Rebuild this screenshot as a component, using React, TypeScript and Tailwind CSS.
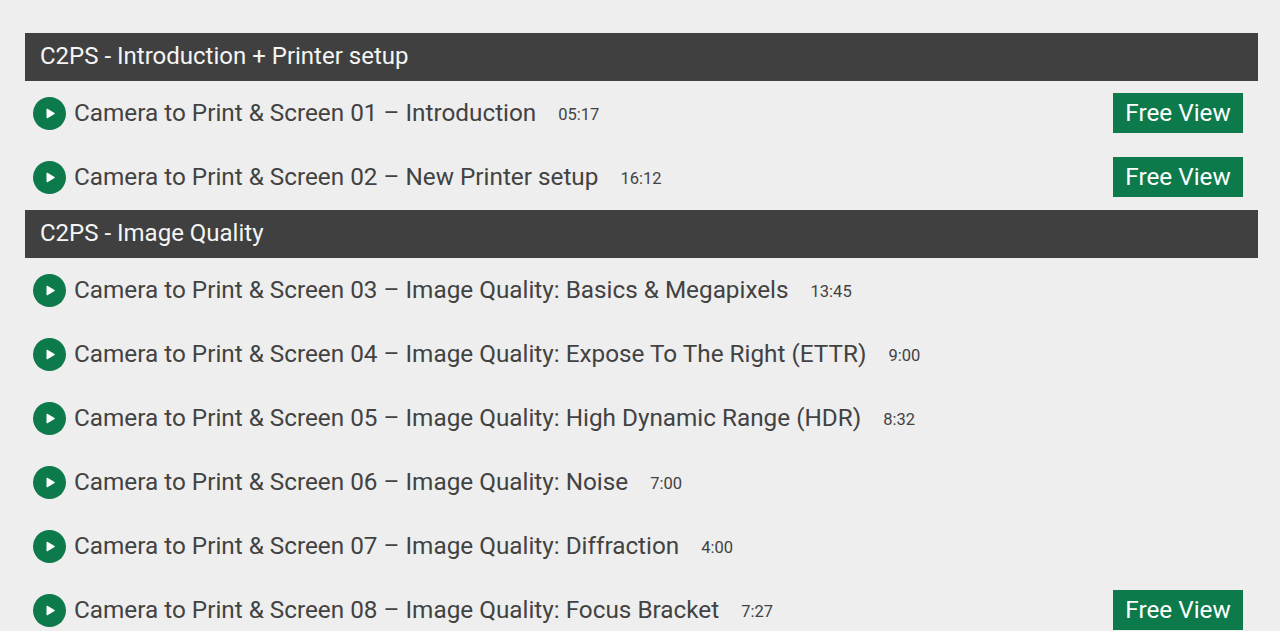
import React from 'react';

type Lesson = { title: string; time: string; free?: boolean };

const sections: { name: string; lessons: Lesson[] }[] = [
  {
    name: 'C2PS - Introduction + Printer setup',
    lessons: [
      { title: 'Camera to Print & Screen 01 – Introduction', time: '05:17', free: true },
      { title: 'Camera to Print & Screen 02 – New Printer setup', time: '16:12', free: true },
    ],
  },
  {
    name: 'C2PS - Image Quality',
    lessons: [
      { title: 'Camera to Print & Screen 03 – Image Quality: Basics & Megapixels', time: '13:45' },
      { title: 'Camera to Print & Screen 04 – Image Quality: Expose To The Right (ETTR)', time: '9:00' },
      { title: 'Camera to Print & Screen 05 – Image Quality: High Dynamic Range (HDR)', time: '8:32' },
      { title: 'Camera to Print & Screen 06 – Image Quality: Noise', time: '7:00' },
      { title: 'Camera to Print & Screen 07 – Image Quality: Diffraction', time: '4:00' },
      { title: 'Camera to Print & Screen 08 – Image Quality: Focus Bracket', time: '7:27', free: true },
    ],
  },
];

const PlayIcon = () => (
  <svg viewBox="0 0 33 33" className="w-[33px] h-[33px] shrink-0">
    <circle cx="16.5" cy="16.5" r="16.5" fill="#0d7a4c" />
    <path d="M14 12 L21.5 16.5 L14 21 Z" fill="#fff" stroke="#fff" strokeWidth="1" strokeLinejoin="round" />
  </svg>
);

const LessonRow: React.FC<{ lesson: Lesson }> = ({ lesson }) => (
  <div className="flex items-center h-16 pl-2 pr-[15px]">
    <PlayIcon />
    <span className="ml-2 text-[24.3px] text-[#424242]">{lesson.title}</span>
    <span className="ml-[22px] mt-1 text-[16.5px] text-[#424242]">{lesson.time}</span>
    {lesson.free && (
      <span className="ml-auto flex items-center justify-center w-[130px] h-10 bg-[#0d7a4c] text-white text-[24.3px] font-[450]">
        Free View
      </span>
    )}
  </div>
);

export default function App() {
  return (
    <div className="h-[631px] overflow-hidden bg-[#eeeeee] pt-[33px] pl-[25px] pr-[22px] font-['Roboto',sans-serif]">
      {sections.map((section) => (
        <div key={section.name}>
          <div className="flex items-center h-12 pl-[15px] pb-0.5 bg-[#404040] text-[#f5f5f5] text-[24px]">{section.name}</div>
          {section.lessons.map((lesson) => (
            <LessonRow key={lesson.title} lesson={lesson} />
          ))}
          <div className="h-px" />
        </div>
      ))}
    </div>
  );
}
